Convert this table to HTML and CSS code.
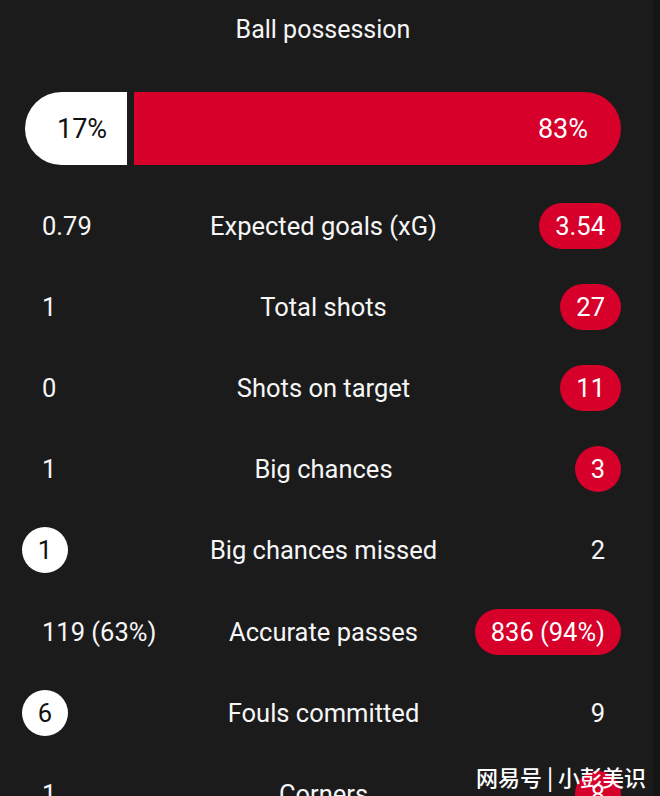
FILE: index.html
```
<!DOCTYPE html>
<html>
<head>
<meta charset="utf-8">
<link rel="stylesheet" href="styles.css">
</head>
<body>
<div class="page">
  <div class="title">Ball possession</div>
  <div class="bar">
    <div class="seg seg-home" style="width:102px">17%</div>
    <div class="seg seg-away" style="width:487px">83%</div>
  </div>
  <div class="rows">
    <div class="row">
      <div class="cell left"><span class="val">0.79</span></div>
      <div class="label">Expected goals (xG)</div>
      <div class="cell right"><span class="val red">3.54</span></div>
    </div>
    <div class="row">
      <div class="cell left"><span class="val">1</span></div>
      <div class="label">Total shots</div>
      <div class="cell right"><span class="val red">27</span></div>
    </div>
    <div class="row">
      <div class="cell left"><span class="val">0</span></div>
      <div class="label">Shots on target</div>
      <div class="cell right"><span class="val red">11</span></div>
    </div>
    <div class="row">
      <div class="cell left"><span class="val">1</span></div>
      <div class="label">Big chances</div>
      <div class="cell right"><span class="val red">3</span></div>
    </div>
    <div class="row">
      <div class="cell left"><span class="val white">1</span></div>
      <div class="label">Big chances missed</div>
      <div class="cell right"><span class="val">2</span></div>
    </div>
    <div class="row">
      <div class="cell left"><span class="val">119 (63%)</span></div>
      <div class="label">Accurate passes</div>
      <div class="cell right"><span class="val red">836 (94%)</span></div>
    </div>
    <div class="row">
      <div class="cell left"><span class="val white">6</span></div>
      <div class="label">Fouls committed</div>
      <div class="cell right"><span class="val">9</span></div>
    </div>
    <div class="row">
      <div class="cell left"><span class="val">1</span></div>
      <div class="label">Corners</div>
      <div class="cell right"><span class="val red">8</span></div>
    </div>
  </div>
  <div class="watermark">网易号 | 小彭美识</div>
</div>
</body>
</html>
```
FILE: styles.css
```
html, body {
  margin: 0;
  padding: 0;
  background: #1b1b1c;
  overflow: hidden;
}
.page {
  position: relative;
  width: 660px;
  height: 796px;
  overflow: hidden;
  font-family: "Roboto", "Liberation Sans", sans-serif;
  color: #f6f6f6;
  background: #1b1b1c;
  box-sizing: border-box;
  border-right: 7px solid #151516;
}
.title {
  height: 60px;
  line-height: 60px;
  text-align: center;
  font-size: 25px;
  padding-right: 7px;
}
.bar {
  display: flex;
  gap: 7px;
  margin: 32px 0 0 25px;
  width: 596px;
  height: 73px;
  font-size: 27px;
}
.seg {
  flex: none;
  box-sizing: border-box;
  display: flex;
  align-items: center;
}
.seg-home {
  background: #ffffff;
  color: #111;
  border-radius: 37px 0 0 37px;
  padding-left: 32px;
}
.seg-away {
  background: #d6002a;
  color: #fff;
  border-radius: 0 37px 37px 0;
  justify-content: flex-end;
  padding-right: 33px;
}
.rows {
  margin: 20px 0 0 22px;
  width: 599px;
}
.row {
  display: grid;
  grid-template-columns: 1fr auto 1fr;
  align-items: center;
  height: 81.2px;
}
.label {
  font-size: 25.5px;
  text-align: center;
  padding-left: 4px;
}
.cell {
  display: flex;
}
.cell.right {
  justify-content: flex-end;
}
.val {
  display: inline-flex;
  align-items: center;
  justify-content: center;
  height: 46px;
  min-width: 46px;
  box-sizing: border-box;
  border-radius: 23px;
  font-size: 25.5px;
  padding: 0 16px;
}
.cell.left .val {
  padding-left: 20px;
  justify-content: flex-start;
}
.cell.left .val.white {
  padding: 0;
  justify-content: center;
}
.val.red {
  background: #d6002a;
  color: #fff;
}
.val.white {
  background: #fff;
  color: #111;
}
.watermark {
  position: absolute;
  left: 476px;
  top: 760px;
  font-family: "Noto Sans CJK SC", sans-serif;
  font-size: 22px;
  font-weight: 500;
  color: #fff;
  white-space: nowrap;
}
```
